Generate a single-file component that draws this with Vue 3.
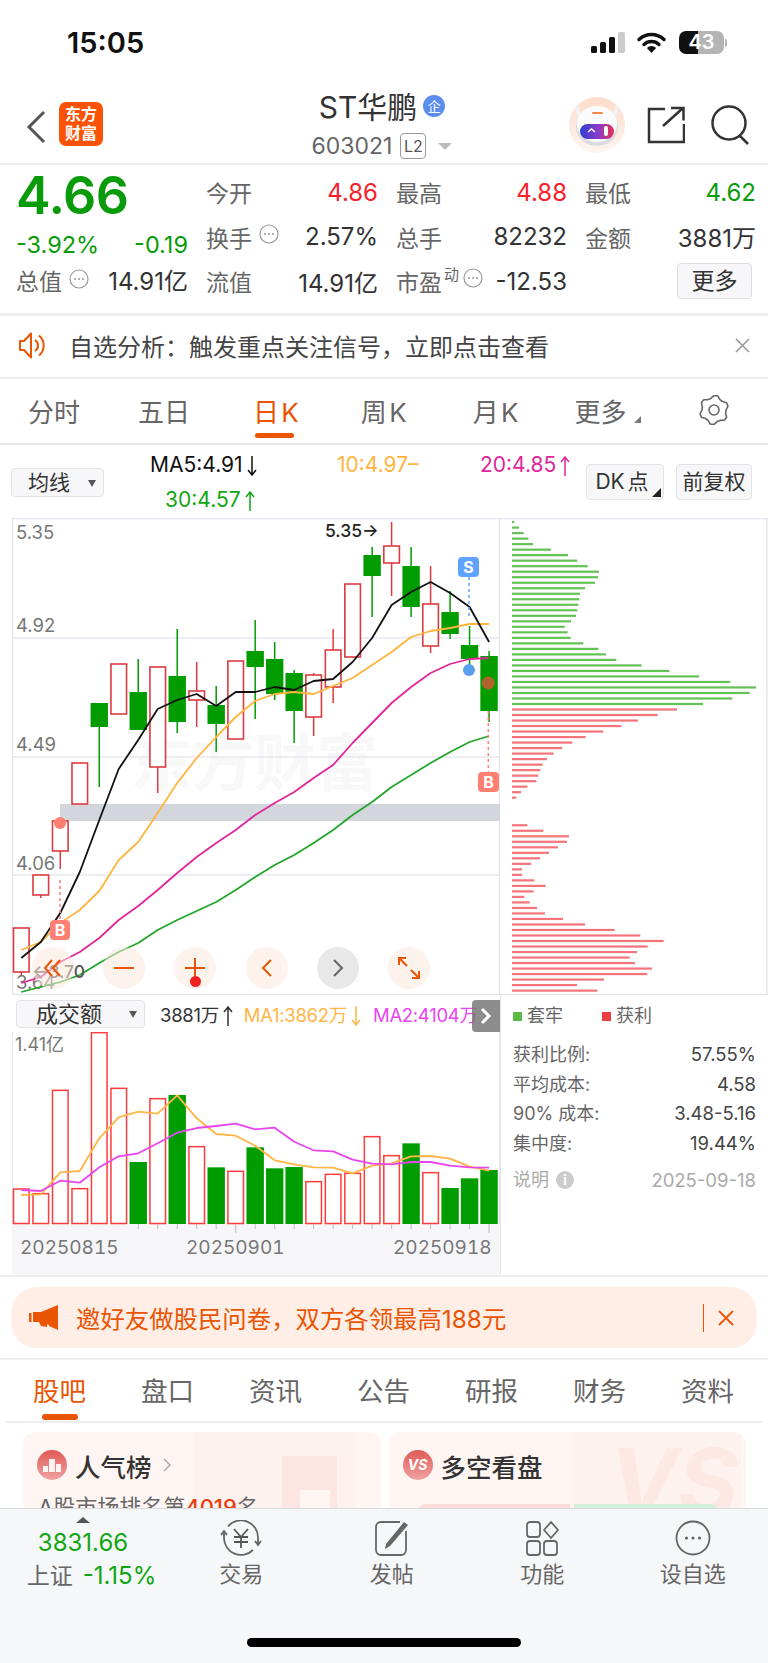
<script setup>
const step = 19.49;
const cx = (i) => 21.3 + step * i;

// [top, bottom, wickTop, wickBottom, red]
const candles = [
    [928, 972, 928, 975, 1],
    [875, 895, 875, 898, 1],
    [821, 851, 821, 869, 1],
    [763, 804, 763, 804, 1],
    [703, 727, 703, 787, 0],
    [664, 714, 664, 714, 1],
    [692, 730, 659, 730, 0],
    [667, 767, 667, 793, 1],
    [676, 722, 629, 733, 0],
    [691, 700, 662, 727, 1],
    [705, 724, 686, 752, 0],
    [661, 739, 661, 739, 1],
    [651, 667, 620, 719, 0],
    [659, 694, 642, 700, 0],
    [673, 711, 670, 743, 0],
    [675, 717, 673, 736, 1],
    [650, 687, 629, 703, 1],
    [584, 657, 584, 658, 1],
    [555, 576, 547, 617, 0],
    [546, 563, 522, 596, 1],
    [566, 607, 547, 617, 0],
    [604, 646, 566, 653, 1],
    [612, 634, 591, 639, 0],
    [645, 659, 626, 675, 0],
    [656, 711, 651, 722, 0],
];

const toLine = (ys) => ys.map((y, i) => `${cx(i).toFixed(1)},${y}`).join(' ');

const ma5 = toLine([958, 942, 913, 872, 820, 769, 740, 709, 700, 694, 706, 692, 692, 687, 690, 681, 679, 662, 638, 605, 592, 582, 593, 607, 642]);
const ma10 = toLine([950, 942, 923, 910, 891, 860, 842, 813, 783, 758, 737, 717, 701, 694, 692, 694, 686, 678, 665, 652, 637, 631, 628, 624, 624]);
const ma20 = toLine([983, 977, 962, 952, 938, 920, 906, 890, 873, 857, 843, 830, 815, 803, 792, 778, 765, 743, 723, 703, 687, 673, 664, 659, 658]);
const ma30 = toLine([992, 987, 982, 975, 963, 952, 943, 930, 920, 911, 902, 890, 877, 865, 855, 843, 830, 815, 802, 787, 775, 763, 752, 742, 736]);

// [top y in 3x crop, red]
const volumes = [
    [567, 1], [581, 1], [271, 1], [566, 1], [98, 1], [265, 1], [486, 0], [296, 1], [285, 0], [440, 1],
    [502, 0], [514, 1], [442, 0], [505, 0], [501, 0], [545, 1], [523, 1], [520, 1], [410, 1], [467, 1],
    [430, 0], [518, 1], [564, 0], [535, 0], [510, 0],
].map(([top, red]) => ({ top: 1000 + top / 3, red }));

const toVolLine = (ys) => ys.map((y, i) => `${cx(i).toFixed(1)},${(1000 + y / 3).toFixed(1)}`).join(' ');
const vma1 = toVolLine([585, 583, 517, 513, 415, 352, 335, 341, 286, 355, 402, 407, 437, 481, 493, 502, 503, 520, 497, 490, 469, 468, 476, 500, 512]);
const vma2 = toVolLine([570, 573, 542, 548, 502, 469, 460, 430, 398, 384, 378, 371, 388, 383, 425, 451, 454, 479, 491, 493, 486, 486, 497, 502, 503]);

const greenEdges = [43, 57, 71, 85, 99, 153, 204, 232, 263, 297, 294, 285, 255, 240, 238, 235, 232, 228, 213, 194, 203, 212, 250, 295, 318, 349, 425, 508, 597, 691, 768, 749, 697, 609];
const redEdges = [531, 473, 414, 364, 310, 257, 217, 186, 161, 141, 128, 121, 115, 109, 82, 63, 49, 0, 0, 0, 0, 82, 130, 207, 201, 174, 147, 120, 93, 66, 66, 103, 137, 101, 73, 89, 111, 135, 189, 255, 344, 421, 491, 443, 411, 389, 405, 456, 442, 312, 231, 292];
const profile = [...greenEdges.map((e) => [e, '#63c254']), ...redEdges.map((e) => [e, '#f5747a'])]
    .map(([edge, color], i) => ({ y: 521 + i * 5.512, w: edge ? (edge - 36) / 3 : 0, color }));

const gridLines = [638, 757, 875];
const axisLabels = [
    { y: 539, text: '5.35' },
    { y: 632, text: '4.92' },
    { y: 751, text: '4.49' },
    { y: 870, text: '4.06' },
    { y: 989, text: '3.64' },
];

const gearPoints = Array.from({ length: 24 }, (_, i) => {
    const a = (Math.PI * 2 * i) / 24;
    const r = [14.5, 14.5, 12, 12][i % 4];
    return `${(15 + r * Math.sin(a)).toFixed(1)},${(15 - r * Math.cos(a)).toFixed(1)}`;
}).join(' ');

const detailTabs = ['盘口', '资讯', '公告', '研报', '财务', '资料'];
</script>

<template>
    <div class="page">
        <svg class="defs" width="0" height="0">
            <symbol id="more-dot" viewBox="0 0 20 20">
                <circle cx="10" cy="10" r="9" fill="none" stroke="#999" stroke-width="1.2" />
                <circle cx="6" cy="10" r="1" fill="#999" />
                <circle cx="10" cy="10" r="1" fill="#999" />
                <circle cx="14" cy="10" r="1" fill="#999" />
            </symbol>
            <symbol id="arr-up" viewBox="0 0 10 20">
                <path d="M5 20V1M1 6l4-5 4 5" fill="none" stroke="currentColor" stroke-width="1.5" />
            </symbol>
            <symbol id="arr-down" viewBox="0 0 10 20">
                <path d="M5 0v19M1 14l4 5 4-5" fill="none" stroke="currentColor" stroke-width="1.5" />
            </symbol>
        </svg>

        <div class="content">
            <div class="status">
                <span class="time">15:05</span>
                <div class="status-icons">
                    <svg width="34" height="21" viewBox="0 0 34 21">
                        <rect x="0" y="14" width="6" height="7" rx="1.5" fill="#111" />
                        <rect x="9" y="10" width="6" height="11" rx="1.5" fill="#111" />
                        <rect x="18" y="5" width="6" height="16" rx="1.5" fill="#111" />
                        <rect x="27" y="0" width="7" height="21" rx="1.5" fill="#ccc" />
                    </svg>
                    <svg width="29" height="21" viewBox="0 0 29 21">
                        <path d="M2 7.5a18 18 0 0 1 25 0" fill="none" stroke="#111" stroke-width="3.4" stroke-linecap="round" />
                        <path d="M7 12.5a11 11 0 0 1 15 0" fill="none" stroke="#111" stroke-width="3.4" stroke-linecap="round" />
                        <path d="M14.5 21l-4.6-5a6.5 6.5 0 0 1 9.2 0z" fill="#111" />
                    </svg>
                    <div class="battery">43</div>
                    <span class="battery-nub"></span>
                </div>
            </div>

            <header class="head">
                <svg class="back" width="20" height="34" viewBox="0 0 20 34">
                    <path d="M18 2L3 17l15 15" fill="none" stroke="#555" stroke-width="3" />
                </svg>
                <div class="logo"><span>东方</span><span>财富</span></div>
                <div class="title">
                    <div class="name">ST华鹏<span class="corp">企</span></div>
                    <div class="code">603021<span class="l2">L2</span><i class="caret"></i></div>
                </div>
                <svg class="robot" width="56" height="56" viewBox="0 0 56 56">
                    <defs>
                        <linearGradient id="visor" x1="0" x2="1" y1="0" y2="0">
                            <stop offset="0" stop-color="#2f3fd0" />
                            <stop offset=".55" stop-color="#8a3bc8" />
                            <stop offset="1" stop-color="#e8304f" />
                        </linearGradient>
                        <linearGradient id="halo" x1="0" x2="0" y1="0" y2="1">
                            <stop offset="0" stop-color="#fddccb" />
                            <stop offset="1" stop-color="#fff6f1" />
                        </linearGradient>
                    </defs>
                    <circle cx="28" cy="28" r="28" fill="url(#halo)" />
                    <path d="M8 10q0 8 7 10M48 10q0 8-7 10" fill="none" stroke="#f2f2f4" stroke-width="4" stroke-linecap="round" />
                    <ellipse cx="28" cy="30" rx="21" ry="19" fill="#dcdce2" />
                    <ellipse cx="28" cy="27" rx="20" ry="18" fill="#fbfbfc" />
                    <rect x="11" y="27" width="34" height="15" rx="7.5" fill="url(#visor)" />
                    <path d="M19 35l3.500-3 3.500 3" fill="none" stroke="#fff" stroke-width="1.500" />
                    <rect x="35" y="29" width="4" height="10" rx="2" fill="#fff" />
                    <rect x="23" y="15" width="11" height="2" rx="1" fill="#f08a4b" />
                </svg>
                <svg class="share" width="38" height="38" viewBox="0 0 38 38">
                    <path d="M18 3H2v33h35V18" fill="none" stroke="#333" stroke-width="2.500" />
                    <path d="M16 20L36 2M24 2h12.500v12.500" fill="none" stroke="#333" stroke-width="2.500" />
                </svg>
                <svg class="search" width="40" height="40" viewBox="0 0 40 40">
                    <circle cx="18" cy="18" r="16.500" fill="none" stroke="#333" stroke-width="2.500" />
                    <path d="M29 31l8 8" stroke="#333" stroke-width="2.500" />
                </svg>
            </header>

            <section class="quote">
                <div class="quote-main">
                    <div class="price">4.66</div>
                    <div class="change"><span>-3.92%</span><span>-0.19</span></div>
                    <div class="cap">
                        <span class="label">总值<svg class="more-dot"><use href="#more-dot" /></svg></span>
                        <span class="val">14.91亿</span>
                    </div>
                </div>
                <div class="stats">
                    <div class="cell"><span class="label">今开</span><span class="val red">4.86</span></div>
                    <div class="cell"><span class="label">最高</span><span class="val red">4.88</span></div>
                    <div class="cell"><span class="label">最低</span><span class="val green">4.62</span></div>
                    <div class="cell">
                        <span class="label">换手<svg class="more-dot"><use href="#more-dot" /></svg></span>
                        <span class="val">2.57%</span>
                    </div>
                    <div class="cell"><span class="label">总手</span><span class="val">82232</span></div>
                    <div class="cell"><span class="label">金额</span><span class="val">3881万</span></div>
                    <div class="cell"><span class="label">流值</span><span class="val">14.91亿</span></div>
                    <div class="cell">
                        <span class="label">市盈<sup>动</sup><svg class="more-dot tight"><use href="#more-dot" /></svg></span>
                        <span class="val">-12.53</span>
                    </div>
                    <div class="cell end"><span class="more-btn">更多</span></div>
                </div>
            </section>

            <div class="notice">
                <svg width="32" height="27" viewBox="0 0 32 27">
                    <path d="M2 9h4l7-7.500v24l-7-7.500H2z" fill="none" stroke="#ea5504" stroke-width="2" stroke-linejoin="round" />
                    <path d="M17 8a6.500 6.500 0 0 1 0 11M21 3.500a13 13 0 0 1 0 20" fill="none" stroke="#ea5504" stroke-width="2" />
                </svg>
                <span class="notice-text">自选分析：触发重点关注信号，立即点击查看</span>
                <svg class="notice-close" width="15" height="15" viewBox="0 0 15 15">
                    <path d="M1 1l13 13M14 1L1 14" stroke="#999" stroke-width="1.600" />
                </svg>
            </div>

            <nav class="period">
                <span class="period-tab w1">分时</span>
                <span class="period-tab w2">五日</span>
                <span class="period-tab w3 active">日 K</span>
                <span class="period-tab w4">周 K</span>
                <span class="period-tab w5">月 K</span>
                <span class="period-tab w6">更多<i class="corner"></i></span>
                <svg class="gear" width="30" height="30" viewBox="0 0 30 30">
                    <polygon :points="gearPoints" fill="none" stroke="#666" stroke-width="1.600" stroke-linejoin="round" />
                    <circle cx="15" cy="15" r="5" fill="none" stroke="#666" stroke-width="1.600" />
                </svg>
            </nav>

            <div class="ma-row">
                <div class="select ma-select">均线<i class="tri"></i></div>
                <div class="ma-values">
                    <div class="ma-top">
                        <span class="dark">MA5:4.91<svg class="arr"><use href="#arr-down" /></svg></span>
                        <span class="orange">10:4.97–</span>
                        <span class="pink">20:4.85<svg class="arr"><use href="#arr-up" /></svg></span>
                    </div>
                    <div class="ma-bottom">30:4.57<svg class="arr"><use href="#arr-up" /></svg></div>
                </div>
                <div class="tool dk">DK 点<i class="corner dark-corner"></i></div>
                <div class="tool fq">前复权</div>
            </div>

            <section class="charts">
                <div class="charts-left">
                    <div class="kline">
                        <svg width="488" height="477" viewBox="12 518 488 477" class="chart-svg">
                            <rect x="12.500" y="518.500" width="487" height="476" fill="#fff" stroke="#e3e6ee" stroke-width="1.500" />
                            <text x="130" y="786" class="watermark">东方财富</text>
                            <rect x="60" y="804" width="440" height="17" fill="#d3d6dc" />
                            <line v-for="y in gridLines" :key="y" x1="12" x2="500" :y1="y" :y2="y" stroke="#e6e9f0" stroke-width="1.500" />
                            <text v-for="l in axisLabels" :key="l.y" x="16" :y="l.y" class="axis">{{ l.text }}</text>

                            <g v-for="(c, i) in candles" :key="i">
                                <line :x1="cx(i)" :x2="cx(i)" :y1="c[2]" :y2="c[3]" :stroke="c[4] ? '#dc3b3f' : '#009c00'" stroke-width="1.500" />
                                <rect v-if="c[4]" :x="cx(i) - 7.800" :y="c[0]" width="15.600" :height="c[1] - c[0]" fill="#fff" stroke="#dc3b3f" stroke-width="1.600" />
                                <rect v-else :x="cx(i) - 8.700" :y="c[0]" width="17.400" :height="c[1] - c[0]" fill="#009c00" />
                            </g>

                            <polyline :points="ma30" class="line" stroke="#22a52a" />
                            <polyline :points="ma20" class="line" stroke="#e0269a" />
                            <polyline :points="ma10" class="line" stroke="#ffb43c" />
                            <polyline :points="ma5" class="line" stroke="#111" />

                            <text x="325" y="537" class="peak">5.35→</text>
                            <text x="32" y="978" class="low">←3.70</text>

                            <line x1="469" x2="469" y1="577" y2="618" stroke="#5ea4ff" stroke-width="1.500" stroke-dasharray="3 3" />
                            <rect x="458" y="557" width="21" height="20" rx="4" fill="#5ea4ff" />
                            <text x="468.500" y="573" class="tag">S</text>
                            <circle cx="469" cy="670" r="6" fill="#5a9eee" />
                            <circle cx="488.300" cy="683" r="6.500" fill="#b0622c" />

                            <line x1="488.300" x2="488.300" y1="711" y2="772" stroke="#ff7f73" stroke-width="1.500" stroke-dasharray="3 3" />
                            <rect x="478" y="772" width="21" height="20" rx="4" fill="#ff7f73" />
                            <text x="488.500" y="788" class="tag">B</text>

                            <circle cx="60" cy="823" r="6" fill="#ff7f73" />
                            <line x1="60" x2="60" y1="880" y2="920" stroke="#ff7f73" stroke-width="1.500" stroke-dasharray="3 3" />
                            <rect x="50" y="920" width="20" height="20" rx="4" fill="#ff7f73" />
                            <text x="60" y="936" class="tag">B</text>
                        </svg>

                        <div class="controls">
                            <span class="ctrl see">
                                <svg width="20" height="20" viewBox="0 0 20 20"><path d="M9 2L2 10l7 8M17 2l-7 8 7 8" fill="none" stroke="#ea5504" stroke-width="2" /></svg>
                            </span>
                            <span class="ctrl">
                                <svg width="20" height="20" viewBox="0 0 20 20"><path d="M0 10h20" stroke="#ea5504" stroke-width="2" /></svg>
                            </span>
                            <span class="ctrl">
                                <svg width="20" height="20" viewBox="0 0 20 20"><path d="M0 10h20M10 0v20" stroke="#ea5504" stroke-width="2" /></svg>
                                <i class="red-dot"></i>
                            </span>
                            <span class="ctrl">
                                <svg width="20" height="20" viewBox="0 0 20 20"><path d="M14 2l-8 8 8 8" fill="none" stroke="#ea5504" stroke-width="2" /></svg>
                            </span>
                            <span class="ctrl gray">
                                <svg width="20" height="20" viewBox="0 0 20 20"><path d="M6 2l8 8-8 8" fill="none" stroke="#666" stroke-width="2" /></svg>
                            </span>
                            <span class="ctrl">
                                <svg width="22" height="22" viewBox="0 0 22 22"><path d="M1 8V1h7M1 1l8 8M21 14v7h-7M21 21l-8-8" fill="none" stroke="#ea5504" stroke-width="2" /></svg>
                            </span>
                        </div>
                    </div>

                    <div class="vol-head">
                        <div class="select vol-select">成交额<i class="tri"></i></div>
                        <span class="vol-now">3881万<svg class="arr"><use href="#arr-up" /></svg></span>
                        <span class="vol-ma1">MA1:3862万<svg class="arr"><use href="#arr-down" /></svg></span>
                        <span class="vol-ma2">MA2:4104万</span>
                        <span class="vol-tab">
                            <svg width="12" height="18" viewBox="0 0 12 18"><path d="M2 2l7 7-7 7" fill="none" stroke="#fff" stroke-width="3" /></svg>
                        </span>
                    </div>

                    <svg width="488" height="243" viewBox="12 1032 488 243" class="chart-svg">
                        <rect x="12" y="1224" width="488" height="51" fill="#f6f6f8" />
                        <path d="M12.500 1224V1032M499.500 1224V1032" stroke="#e3e6ee" stroke-width="1" />
                        <text x="15" y="1051" class="axis small">1.41亿</text>
                        <g v-for="(v, i) in volumes" :key="i">
                            <rect v-if="v.red" :x="cx(i) - 7.800" :y="v.top" width="15.600" :height="1223.500 - v.top" fill="#fff" stroke="#ff3b3b" stroke-width="1.500" />
                            <rect v-else :x="cx(i) - 8.700" :y="v.top" width="17.400" :height="1224 - v.top" fill="#009c00" />
                            <line v-if="i >= 6" :x1="cx(i)" :x2="cx(i)" y1="1224" :y2="i === 11 || i === 24 ? 1233 : 1229" stroke="#bbb" />
                        </g>
                        <polyline :points="vma1" class="line" stroke="#ffb547" />
                        <polyline :points="vma2" class="line" stroke="#e845f0" />
                        <text x="20" y="1254" class="date">20250815</text>
                        <text x="186" y="1254" class="date">20250901</text>
                        <text x="393" y="1254" class="date">20250918</text>
                    </svg>
                </div>

                <div class="charts-right">
                    <svg width="268" height="477" viewBox="500 518 268 477" class="chart-svg">
                        <path d="M500 518.500h267V994.500H500" fill="none" stroke="#e3e6ee" stroke-width="1.500" />
                        <rect v-for="(b, i) in profile" :key="i" x="512" :y="b.y" :width="b.w" height="2.200" :fill="b.color" />
                    </svg>
                    <div class="profit">
                        <div class="legend">
                            <span class="legend-item"><i class="sq g"></i>套牢</span>
                            <span class="legend-item"><i class="sq r"></i>获利</span>
                        </div>
                        <div class="profit-row"><span>获利比例:</span><b>57.55%</b></div>
                        <div class="profit-row"><span>平均成本:</span><b>4.58</b></div>
                        <div class="profit-row"><span>90% 成本:</span><b>3.48-5.16</b></div>
                        <div class="profit-row"><span>集中度:</span><b>19.44%</b></div>
                        <div class="profit-foot">
                            <span class="explain">说明<i class="info">i</i></span>
                            <span class="profit-date">2025-09-18</span>
                        </div>
                    </div>
                </div>
            </section>

            <div class="promo">
                <div class="pill">
                    <svg width="30" height="25" viewBox="0 0 30 25">
                        <rect x="0" y="8" width="2.500" height="9" fill="#ea5504" />
                        <path d="M4 7h8L29 0v25l-9-4v-1l-2-1v3l-6-1-2-4H4z" fill="#ea5504" />
                    </svg>
                    <span class="pill-text">邀好友做股民问卷，双方各领最高188元</span>
                    <i class="pill-line"></i>
                    <svg width="16" height="16" viewBox="0 0 16 16">
                        <path d="M1 1l14 14M15 1L1 15" stroke="#ea5504" stroke-width="1.800" />
                    </svg>
                </div>
            </div>

            <nav class="details">
                <span class="detail-tab active">股吧</span>
                <span v-for="t in detailTabs" :key="t" class="detail-tab">{{ t }}</span>
            </nav>

            <div class="cards">
                <div class="card">
                    <i class="deco-band"></i>
                    <i class="deco-block"></i>
                    <i class="deco-cut"></i>
                    <div class="card-title">
                        <svg width="30" height="30" viewBox="0 0 30 30">
                            <defs>
                                <linearGradient id="badge" x1="0" x2="0" y1="0" y2="1">
                                    <stop offset="0" stop-color="#df5a55" />
                                    <stop offset="1" stop-color="#f0a3a3" />
                                </linearGradient>
                            </defs>
                            <circle cx="15" cy="15" r="15" fill="url(#badge)" />
                            <path d="M6 22v-6h5v6zM12 22V9h6v13zM19 22v-8h5v8z" fill="#fff" opacity=".9" />
                        </svg>
                        <span>人气榜</span>
                        <svg class="chev" width="8" height="14" viewBox="0 0 8 14"><path d="M1 1l6 6-6 6" fill="none" stroke="#aaa" stroke-width="1.500" /></svg>
                    </div>
                    <div class="card-sub">A股市场排名第<b>4019</b>名</div>
                </div>
                <div class="card">
                    <i class="deco-band right"></i>
                    <span class="card-vs">VS</span>
                    <div class="card-title">
                        <span class="vs-icon">VS</span>
                        <span>多空看盘</span>
                    </div>
                    <div class="strip"><i class="strip-r"></i><i class="strip-g"></i></div>
                </div>
            </div>
        </div>

        <footer class="foot">
            <div class="foot-grid">
                <div class="market">
                    <i class="market-up"></i>
                    <div class="market-num">3831.66</div>
                    <div class="market-line">上证<span>-1.15%</span></div>
                </div>
                <div class="foot-item">
                    <svg width="42" height="36" viewBox="0 0 42 36">
                        <path d="M8 6.500A17 17 0 0 1 38 18M33 30A17 17 0 0 1 4 18v-6" fill="none" stroke="#666" stroke-width="1.800" />
                        <path d="M1 15l3-4 3 4M35 21l3 4 3-4" fill="none" stroke="#666" stroke-width="1.800" />
                        <path d="M38 18v7" fill="none" stroke="#666" stroke-width="1.800" />
                        <path d="M14 9l7 8 7-8M14 17h14M14 22h14M21 17v11" fill="none" stroke="#555" stroke-width="1.800" />
                    </svg>
                    <span>交易</span>
                </div>
                <div class="foot-item">
                    <svg width="36" height="36" viewBox="0 0 36 36">
                        <path d="M26 2H7a5 5 0 0 0-5 5v23a5 5 0 0 0 5 5h20a5 5 0 0 0 5-5V11" fill="none" stroke="#666" stroke-width="1.800" />
                        <path d="M12 24L30 2l4 3-18 21-5 3z" fill="#666" />
                    </svg>
                    <span>发帖</span>
                </div>
                <div class="foot-item">
                    <svg width="36" height="36" viewBox="0 0 36 36">
                        <rect x="3" y="2" width="13" height="15" rx="3" fill="none" stroke="#666" stroke-width="1.800" />
                        <rect x="3" y="21" width="13" height="14" rx="3" fill="none" stroke="#666" stroke-width="1.800" />
                        <rect x="20" y="21" width="13" height="14" rx="3" fill="none" stroke="#666" stroke-width="1.800" />
                        <path d="M27 2l7 8-7 8-7-8z" fill="none" stroke="#666" stroke-width="1.800" stroke-linejoin="round" />
                    </svg>
                    <span>功能</span>
                </div>
                <div class="foot-item">
                    <svg width="36" height="36" viewBox="0 0 36 36">
                        <circle cx="18" cy="18" r="16.500" fill="none" stroke="#666" stroke-width="1.800" />
                        <circle cx="11.500" cy="18" r="1.600" fill="#666" />
                        <circle cx="18" cy="18" r="1.600" fill="#666" />
                        <circle cx="24.500" cy="18" r="1.600" fill="#666" />
                    </svg>
                    <span>设自选</span>
                </div>
            </div>
            <i class="home-bar"></i>
        </footer>
    </div>
</template>

<style scoped>
.page {
    display: flex;
    flex-direction: column;
    width: 768px;
    height: 1663px;
    overflow: hidden;
    background: #fff;
    color: #333;
    font-family: Inter, "Noto Sans CJK SC", sans-serif;
}

.defs {
    position: absolute;
}

.content {
    flex: 1;
    min-height: 0;
    overflow: hidden;
}

.status {
    display: flex;
    align-items: flex-start;
    justify-content: space-between;
    height: 95px;
    padding: 25px 43px 0 67px;
    box-sizing: border-box;
}

.time {
    font-size: 29px;
    line-height: 36px;
    font-weight: 600;
    color: #111;
}

.status-icons {
    display: flex;
    align-items: center;
    gap: 12px;
    margin-top: 6px;
}

.battery {
    width: 45px;
    height: 23px;
    margin-left: 1px;
    border-radius: 7px;
    background: linear-gradient(90deg, #111 43%, #b4b4b4 43%);
    color: #fff;
    font-size: 20px;
    line-height: 23px;
    font-weight: 600;
    text-align: center;
}

.battery-nub {
    width: 2px;
    height: 8px;
    margin-left: -11px;
    margin-right: -2px;
    border-radius: 0 2px 2px 0;
    background: #b4b4b4;
}

.head {
    display: flex;
    align-items: center;
    height: 70px;
    padding-left: 26px;
    box-sizing: border-box;
    border-bottom: 2px solid #eee;
}

.back {
    flex: none;
    margin-top: -4px;
}

.logo {
    display: flex;
    flex-direction: column;
    align-items: center;
    justify-content: center;
    flex: none;
    width: 44px;
    height: 44px;
    margin: -10px 0 0 13px;
    border-radius: 7px;
    background: #fc5205;
    color: #fff;
    font-size: 16px;
    line-height: 19px;
    font-weight: 700;
}

.title {
    display: flex;
    flex-direction: column;
    align-items: center;
    flex: none;
    width: 200px;
    margin: -9px 0 0 179px;
}

.name {
    display: flex;
    align-items: center;
    margin-top: -3px;
    font-size: 30px;
    line-height: 40px;
    color: #333;
}

.corp {
    width: 22px;
    height: 22px;
    margin: -2px 0 0 6px;
    border-radius: 50%;
    background: #5b8def;
    color: #fff;
    font-size: 13px;
    line-height: 22px;
    text-align: center;
}

.code {
    display: flex;
    align-items: center;
    margin-top: 6px;
    font-size: 23px;
    line-height: 27px;
    color: #666;
}

.l2 {
    width: 26px;
    height: 26px;
    margin-left: 8px;
    box-sizing: border-box;
    border: 1px solid #999;
    border-radius: 4px;
    font-size: 16px;
    line-height: 24px;
    text-align: center;
    color: #555;
}

.caret {
    width: 0;
    height: 0;
    margin-left: 12px;
    border-top: 7px solid #bbb;
    border-left: 7px solid transparent;
    border-right: 7px solid transparent;
}

.robot {
    flex: none;
    margin: -9px 0 0 87px;
}

.share {
    flex: none;
    margin: -9px 0 0 22px;
}

.search {
    flex: none;
    margin: -9px 0 0 26px;
}

.quote {
    display: flex;
    height: 148px;
    border-bottom: 3px solid #eee;
}

.quote-main {
    flex: none;
    width: 172px;
    margin-left: 16px;
}

.price {
    height: 62px;
    font-size: 52px;
    line-height: 62px;
    font-weight: 600;
    color: #0a9b0a;
    letter-spacing: -0.5px;
}

.change {
    display: flex;
    justify-content: space-between;
    height: 36px;
    font-size: 23.500px;
    line-height: 36px;
    color: #0a9b0a;
}

.cap {
    display: flex;
    justify-content: space-between;
    height: 38px;
    line-height: 38px;
}

.label {
    display: inline-flex;
    align-items: center;
    font-size: 23px;
    color: #666;
    white-space: nowrap;
}

.label sup {
    font-size: 15px;
    line-height: 1;
    margin: -14px 2px 0 2px;
}

.val {
    font-size: 24px;
    color: #333;
    white-space: nowrap;
}

.red {
    color: #f5222d;
}

.green {
    color: #0a9b0a;
}

.more-dot {
    width: 20px;
    height: 20px;
    margin: -6px 0 0 7px;
}

.more-dot.tight {
    margin-left: 2px;
}

.stats {
    display: grid;
    flex: none;
    grid-template-columns: 172px 171px 171px;
    grid-auto-rows: 44.5px;
    column-gap: 18px;
    padding: 5px 0 0 18px;
}

.cell {
    display: flex;
    align-items: center;
    justify-content: space-between;
}

.cell.end {
    justify-content: flex-end;
    padding-right: 4px;
}

.more-btn {
    width: 75px;
    height: 36px;
    box-sizing: border-box;
    border: 1px solid #ddd;
    border-radius: 4px;
    background: #f7f7f9;
    font-size: 23px;
    line-height: 34px;
    text-align: center;
}

.notice {
    display: flex;
    align-items: center;
    height: 63px;
    padding: 0 18px 3px 18px;
    box-sizing: border-box;
    border-bottom: 2px solid #eee;
}

.notice-text {
    flex: 1;
    margin-left: 19px;
    font-size: 24px;
    color: #444;
}

.period {
    display: flex;
    align-items: center;
    position: relative;
    height: 66px;
    box-sizing: border-box;
    border-bottom: 2px solid #e6e6ea;
    padding-bottom: 2px;
    font-size: 26px;
    word-spacing: -5px;
    color: #666;
}

.period-tab {
    position: relative;
    white-space: nowrap;
}

.w1 {
    margin-left: 28px;
}

.w2 {
    margin-left: 58px;
}

.w3 {
    margin-left: 63px;
}

.w4 {
    margin-left: 62px;
}

.w5 {
    margin-left: 66px;
}

.w6 {
    margin-left: 56px;
}

.gear {
    margin-left: 73px;
}

.period-tab.active {
    color: #ea5504;
}

.period-tab.active::after {
    content: "";
    position: absolute;
    left: 2px;
    right: 5px;
    bottom: -9px;
    height: 5px;
    border-radius: 3px;
    background: #ea5504;
}

.corner {
    position: absolute;
    right: -15px;
    bottom: 6px;
    width: 0;
    height: 0;
    border-bottom: 7px solid #777;
    border-left: 7px solid transparent;
}

.ma-row {
    display: flex;
    align-items: flex-start;
    height: 73px;
    font-size: 21px;
}

.arr {
    width: 10px;
    height: 20px;
    margin-left: 4px;
    vertical-align: -4px;
}

.select {
    position: relative;
    box-sizing: border-box;
    border: 1px solid #e3e3e6;
    border-radius: 4px;
    background: #f7f7f9;
    color: #333;
}

.ma-select {
    flex: none;
    width: 93px;
    height: 29px;
    margin: 23px 0 0 11px;
    padding-left: 16px;
    font-size: 21px;
    line-height: 27px;
}

.tri {
    position: absolute;
    right: 7px;
    top: 50%;
    margin-top: -3px;
    width: 0;
    height: 0;
    border-top: 7px solid #555;
    border-left: 4px solid transparent;
    border-right: 4px solid transparent;
}

.ma-values {
    flex: none;
    width: 436px;
    margin: 2px 0 0 46px;
    line-height: 35px;
}

.ma-top {
    display: grid;
    grid-template-columns: 187px 143px auto;
}

.ma-bottom {
    padding-left: 15px;
    color: #11a611;
}

.dark {
    color: #111;
}

.orange {
    color: #ffb43c;
}

.pink {
    color: #e0269a;
}

.tool {
    position: relative;
    flex: none;
    height: 36px;
    margin-top: 19px;
    box-sizing: border-box;
    border: 1px solid #e3e3e6;
    border-radius: 4px;
    background: #f7f7f9;
    font-size: 21px;
    line-height: 34px;
    text-align: center;
    color: #333;
}

.dk {
    width: 78px;
    padding-right: 6px;
    word-spacing: -3px;
}

.dark-corner {
    right: 2px;
    bottom: 2px;
    border-bottom-color: #222;
    border-bottom-width: 9px;
    border-left-width: 9px;
}

.fq {
    width: 76px;
    margin-left: 12px;
}

.charts {
    display: flex;
    padding-left: 12px;
    height: 757px;
    border-bottom: 2px solid #eee;
}

.charts-left {
    flex: none;
    width: 488px;
}

.charts-right {
    flex: none;
    width: 268px;
}

.chart-svg {
    display: block;
}

.line {
    fill: none;
    stroke-width: 1.800;
    stroke-linejoin: round;
}

.watermark {
    font-size: 62px;
    font-weight: 700;
    fill: #f8f8f8;
}

.axis {
    font-size: 18.500px;
    fill: #777;
}

.axis.small {
    font-size: 18px;
}

.peak {
    font-size: 17.500px;
    font-weight: 500;
    fill: #222;
}

.low {
    font-size: 17.500px;
    font-weight: 500;
    fill: #555;
}

.tag {
    font-size: 16px;
    font-weight: 700;
    fill: #fff;
    text-anchor: middle;
}

.date {
    font-size: 19px;
    font-variant-numeric: tabular-nums;
    fill: #777;
}

.kline {
    position: relative;
}

.controls {
    position: absolute;
    left: 20px;
    top: 429px;
    display: flex;
    gap: 29.200px;
}

.ctrl {
    position: relative;
    display: flex;
    align-items: center;
    justify-content: center;
    width: 42px;
    height: 42px;
    border-radius: 50%;
    background: rgba(252, 232, 220, 0.55);
}

.ctrl.gray {
    background: #e8e8e8;
}

.red-dot {
    position: absolute;
    left: 16px;
    top: 29px;
    width: 11px;
    height: 11px;
    border-radius: 50%;
    background: #f02020;
}

.vol-head {
    position: relative;
    display: flex;
    align-items: center;
    height: 37px;
    font-size: 19px;
    white-space: nowrap;
}

.vol-select {
    flex: none;
    width: 129px;
    height: 28px;
    margin: 0 0 0 4px;
    padding-left: 19px;
    font-size: 22px;
    line-height: 26px;
}

.vol-now {
    margin-left: 15px;
    font-size: 18.500px;
    color: #333;
    letter-spacing: -0.3px;
}

.vol-ma1 {
    margin-left: 11px;
    font-size: 18.500px;
    color: #ffb547;
    letter-spacing: -0.3px;
}

.vol-ma2 {
    margin-left: 12px;
    font-size: 18.500px;
    color: #e845f0;
    letter-spacing: -0.3px;
}

.vol-tab {
    position: absolute;
    right: 0;
    top: 5px;
    display: flex;
    align-items: center;
    justify-content: center;
    width: 28px;
    height: 32px;
    border-radius: 4px 0 0 4px;
    background: rgba(120, 120, 120, 0.85);
}

.profit {
    height: 280px;
    box-sizing: border-box;
    padding: 8px 12px 0 12px;
    border-left: 1px solid #e3e6ee;
    font-size: 18px;
    color: #666;
}

.legend {
    display: flex;
    gap: 39px;
    height: 26px;
    line-height: 26px;
    margin-bottom: 11px;
}

.legend-item {
    display: flex;
    align-items: center;
}

.sq {
    width: 9px;
    height: 9px;
    margin-right: 5px;
}

.sq.g {
    background: #5cba47;
}

.sq.r {
    background: #ef3e42;
}

.profit-row {
    display: flex;
    justify-content: space-between;
    height: 29.700px;
    line-height: 29.700px;
}

.profit-row b {
    font-size: 18.500px;
    font-weight: 400;
    color: #444;
}

.profit-foot {
    display: flex;
    justify-content: space-between;
    margin-top: 6px;
    line-height: 30px;
    color: #aaa;
}

.profit-date {
    font-size: 18.500px;
}

.explain {
    display: flex;
    align-items: center;
}

.info {
    width: 18px;
    height: 18px;
    margin-left: 7px;
    border-radius: 50%;
    background: #ccc;
    color: #fff;
    font-size: 13px;
    font-style: normal;
    font-weight: 700;
    line-height: 18px;
    text-align: center;
}

.promo {
    height: 83px;
    padding: 10px 11px 0;
    box-sizing: border-box;
    border-bottom: 2px solid #eee;
}

.pill {
    display: flex;
    align-items: center;
    height: 61px;
    padding-left: 18px;
    box-sizing: border-box;
    border-radius: 26px;
    background: #ffeee6;
}

.pill-text {
    width: 627px;
    margin-left: 17px;
    font-size: 24.400px;
    color: #ea5504;
}

.pill-line {
    width: 1px;
    height: 28px;
    margin-right: 14px;
    background: #ea5504;
}

.details {
    display: flex;
    width: 756px;
    height: 63px;
    margin: 0 6px;
    box-sizing: border-box;
    border-bottom: 2px solid #eee;
    padding-left: 27px;
}

.detail-tab {
    position: relative;
    flex: none;
    width: 108px;
    font-size: 26.500px;
    line-height: 63px;
    color: #666;
}

.detail-tab.active {
    color: #ea5504;
}

.detail-tab.active::after {
    content: "";
    position: absolute;
    left: 9px;
    top: 54px;
    width: 36px;
    height: 6px;
    border-radius: 3px;
    background: #ea5504;
}

.cards {
    display: flex;
    gap: 8px;
    padding: 9px 22px 0 23px;
}

.card {
    position: relative;
    flex: 1;
    height: 120px;
    padding: 18px 15px 0;
    box-sizing: border-box;
    overflow: hidden;
    border-radius: 12px 12px 0 0;
    background: #fff6f3;
}

.deco-band {
    position: absolute;
    left: 170px;
    top: 0;
    width: 164px;
    height: 120px;
    background: #fef2ee;
}

.deco-band.right {
    left: 182px;
    width: 170px;
}

.deco-block {
    position: absolute;
    left: 259px;
    top: 24px;
    width: 55px;
    height: 100px;
    background: #fde5e1;
}

.deco-cut {
    position: absolute;
    left: 277px;
    top: 58px;
    width: 30px;
    height: 40px;
    background: #fff6f3;
}

.card-vs {
    position: absolute;
    right: 8px;
    top: 4px;
    font-size: 92px;
    line-height: 92px;
    font-weight: 700;
    font-style: italic;
    color: #fde8e4;
}

.card-title {
    position: relative;
    display: flex;
    align-items: center;
    gap: 8px;
    height: 30px;
    margin-left: -1px;
    font-size: 25.500px;
    font-weight: 500;
    color: #333;
}

.chev {
    margin-left: 3px;
}

.vs-icon {
    width: 30px;
    height: 30px;
    border-radius: 50%;
    background: linear-gradient(180deg, #df5a55, #f0a3a3);
    color: #fff;
    font-size: 14px;
    font-style: italic;
    font-weight: 700;
    line-height: 30px;
    text-align: center;
}

.card-sub {
    position: relative;
    margin-top: 14px;
    font-size: 22px;
    line-height: 26px;
    color: #666;
    white-space: nowrap;
}

.card-sub b {
    color: #ea3d10;
    font-weight: 500;
}

.strip {
    position: relative;
    display: flex;
    gap: 4px;
    margin: 24px 0 0 14px;
    height: 8px;
}

.strip-r {
    width: 152px;
    border-radius: 10px 0 0 0;
    background: #fbdcd8;
}

.strip-g {
    width: 144px;
    border-radius: 0 10px 0 0;
    background: #d3efd9;
}

.foot {
    position: relative;
    flex: none;
    height: 155px;
    box-sizing: border-box;
    border-top: 1px solid #d8dbe0;
    background: #f6f7f9;
}

.foot-grid {
    display: grid;
    grid-template-columns: 166px repeat(4, 150.500px);
    padding-top: 11px;
}

.foot-item {
    display: flex;
    flex-direction: column;
    align-items: center;
    font-size: 22px;
    color: #666;
}

.foot-item span {
    line-height: 36px;
}

.market {
    position: relative;
    display: flex;
    flex-direction: column;
    align-items: center;
}

.market-up {
    width: 0;
    height: 0;
    margin-top: -3px;
    border-bottom: 6px solid #555;
    border-left: 7px solid transparent;
    border-right: 7px solid transparent;
}

.market-num {
    margin-top: 5px;
    font-size: 24px;
    line-height: 30px;
    color: #11a611;
}

.market-line {
    margin-top: 2px;
    padding-left: 17px;
    font-size: 23px;
    line-height: 32px;
    color: #666;
    white-space: nowrap;
}

.market-line span {
    margin-left: 10px;
    font-size: 24px;
    color: #11a611;
}

.home-bar {
    position: absolute;
    left: 247px;
    top: 129px;
    width: 274px;
    height: 9px;
    border-radius: 5px;
    background: #000;
}
</style>
